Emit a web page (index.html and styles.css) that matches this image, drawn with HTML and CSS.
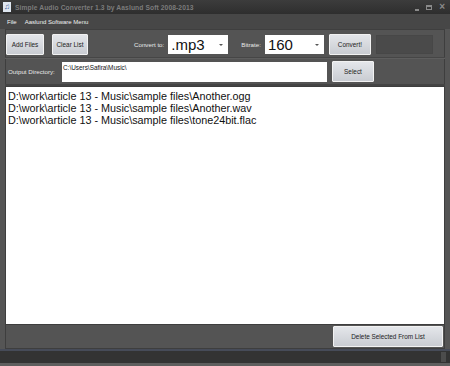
FILE: index.html
```html
<!DOCTYPE html>
<html lang="en">
<head>
    <meta charset="UTF-8">
    <title>Simple Audio Converter 1.3</title>
    <link rel="stylesheet" href="styles.css">
</head>
<body>
    <div class="window">
        <div class="titlebar">
            <span class="app-icon">&#9835;</span>
            <span class="title">Simple Audio Converter 1.3 by Aaslund Soft 2008-2013</span>
            <div class="controls">
                <span class="ctl min"></span>
                <span class="ctl max"></span>
                <span class="ctl close">&#215;</span>
            </div>
        </div>

        <div class="menubar">
            <span>File</span>
            <span>Aaslund Software Menu</span>
        </div>

        <div class="body">
            <div class="toolbar">
                <button class="btn btn-add">Add Files</button>
                <button class="btn btn-clear">Clear List</button>
                <span class="label label-convert">Convert to:</span>
                <div class="combo combo-format"><span>.mp3</span><i class="arrow"></i></div>
                <span class="label label-bitrate">Bitrate:</span>
                <div class="combo combo-bitrate"><span>160</span><i class="arrow"></i></div>
                <button class="btn btn-convert">Convert!</button>
                <div class="progress"></div>
            </div>

            <div class="dirbar">
                <span class="label">Output Directory:</span>
                <div class="textbox">C:\Users\Safira\Music\</div>
                <button class="btn btn-select">Select</button>
            </div>

            <div class="filelist">
                <div>D:\work\article 13 - Music\sample files\Another.ogg</div>
                <div>D:\work\article 13 - Music\sample files\Another.wav</div>
                <div>D:\work\article 13 - Music\sample files\tone24bit.flac</div>
            </div>

            <div class="bottombar">
                <button class="btn btn-delete">Delete Selected From List</button>
            </div>
        </div>

        <div class="statusbar">
            <span class="grip"></span>
        </div>
    </div>
</body>
</html>
```

FILE: styles.css
```css
* {
    margin: 0;
    padding: 0;
    box-sizing: border-box;
}

body {
    width: 450px;
    height: 366px;
    overflow: hidden;
    background: #3a3a3a;
    font-family: 'Liberation Sans', Arial, sans-serif;
}

.window {
    height: 366px;
    display: flex;
    flex-direction: column;
    border-bottom: 3px solid #5e5e5e;
}

.titlebar {
    height: 14px;
    display: flex;
    align-items: center;
    background: linear-gradient(#3c3c3c, #2e2e2e);
    padding-left: 3px;
}

.app-icon {
    width: 8px;
    height: 10px;
    background: #dfe6f0;
    color: #3a5a9a;
    font-size: 8px;
    line-height: 10px;
    text-align: center;
    margin-right: 4px;
}

.title {
    font-size: 6.7px;
    font-weight: bold;
    color: #7c7c7c;
    letter-spacing: 0.1px;
}

.controls {
    margin-left: auto;
    display: flex;
    align-items: center;
    gap: 7px;
    padding-right: 5px;
}

.ctl {
    display: block;
    color: #8a8a8a;
}

.ctl.min {
    width: 4px;
    height: 2px;
    background: #8a8a8a;
    margin-top: 5px;
}

.ctl.max {
    width: 6px;
    height: 5px;
    border: 1px solid #8a8a8a;
    border-top-width: 2px;
}

.ctl.close {
    font-size: 10px;
    line-height: 8px;
    font-weight: bold;
}

.menubar {
    height: 15px;
    display: flex;
    align-items: center;
    gap: 8px;
    padding-left: 7px;
    background: #474747;
    font-size: 6px;
    color: #f0f0f0;
}

.body {
    flex: 1;
    display: flex;
    flex-direction: column;
    background: #545454;
    border-left: 5px solid #555;
    border-right: 5px solid #555;
    box-shadow: inset 1px 0 0 #3e3e3e, inset -1px 0 0 #3e3e3e;
}

.toolbar {
    height: 29px;
    display: flex;
    align-items: center;
    padding-left: 1px;
    border-top: 1px solid #3f3f3f;
    border-bottom: 1px solid #464646;
    padding-top: 1px;
}

.btn {
    height: 21px;
    background: linear-gradient(#e4e6ea, #c9ccd2);
    border: 1px solid #f2f2f2;
    border-radius: 1px;
    font-family: inherit;
    font-size: 6.4px;
    color: #222;
}

.btn-add { width: 38px; }
.btn-clear { width: 36px; margin-left: 8px; }

.label {
    font-size: 6.2px;
    color: #e8e8e8;
}

.label-convert { margin-left: 46px; }

.combo {
    height: 19px;
    background: #fff;
    display: flex;
    align-items: center;
    padding-left: 3px;
    font-size: 15px;
    color: #111;
    position: relative;
}

.combo-format { width: 60px; margin-left: 4px; }
.combo-bitrate { width: 59px; margin-left: 4px; }

.label-bitrate { margin-left: 13px; }

.arrow {
    position: absolute;
    right: 5px;
    top: 9px;
    border-left: 2px solid transparent;
    border-right: 2px solid transparent;
    border-top: 2px solid #555;
}

.btn-convert { width: 42px; margin-left: 5px; }

.progress {
    width: 57px;
    height: 19px;
    margin-left: 5px;
    background: #4a4a4a;
    border: 1px solid #474747;
}

.dirbar {
    height: 28px;
    display: flex;
    align-items: center;
    padding-left: 3px;
    border-top: 1px solid #5e5e5e;
    border-bottom: 2px solid #444;
}

.dirbar .label {
    width: 54px;
}

.textbox {
    width: 265px;
    height: 20px;
    background: #fff;
    font-size: 6.4px;
    color: #111;
    padding: 2px 1px;
}

.btn-select {
    width: 42px;
    margin-left: 5px;
}

.filelist {
    flex: 1;
    background: #fff;
    padding: 3px 2px;
    font-size: 10.8px;
    line-height: 12px;
    color: #111;
    border: 1px solid #3e3e3e;
}

.bottombar {
    height: 24px;
    display: flex;
    justify-content: flex-end;
    align-items: center;
    padding-right: 2px;
    border-bottom: 1px solid #3e3e3e;
}

.btn-delete {
    width: 110px;
    height: 21px;
}

.statusbar {
    height: 14px;
    background: #333;
    border-top: 2px solid #464b58;
    display: flex;
    justify-content: flex-end;
}

.grip {
    width: 5px;
    height: 10px;
    margin-right: 4px;
    margin-top: 1px;
    background: #4c4c4c;
}
```
